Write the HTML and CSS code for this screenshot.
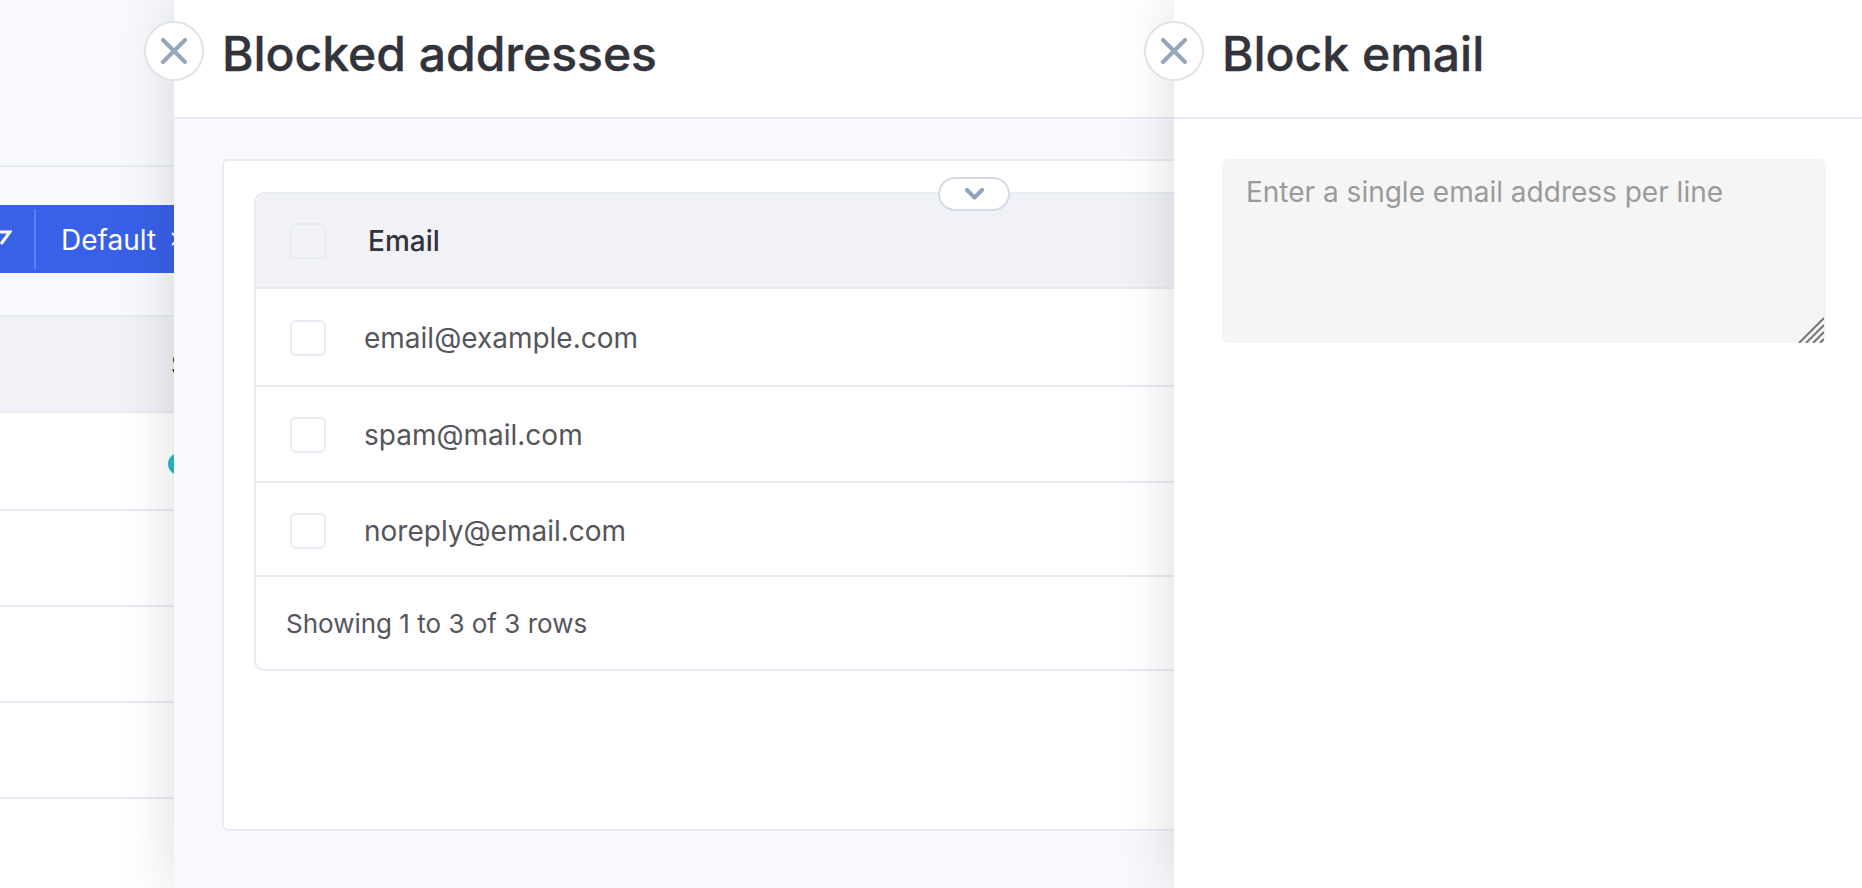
FILE: index.html
```html
<!DOCTYPE html>
<html lang="en">

<head>
  <meta charset="UTF-8">
  <meta name="viewport" content="width=device-width, initial-scale=1.0">
  <title>Blocked addresses</title>
  <link rel="stylesheet" href="styles.css">
</head>

<body>
  <!-- page behind the two side panels -->
  <div class="page">
    <div class="page-top"></div>
    <div class="toolbar">
      <div class="btn-group">
        <svg class="btn-icon" width="12" height="20" viewBox="0 0 12 20">
          <path d="M-6 4H10L1 16" fill="none" stroke="#fff" stroke-width="3" />
        </svg>
        <span class="btn-divider"></span>
        <span class="btn-label">Default</span>
        <svg class="btn-caret" width="14" height="14" viewBox="0 0 14 14">
          <path d="M1 1L7 7L1 13M13 1L7 7L13 13" fill="none" stroke="#fff" stroke-width="2" />
        </svg>
      </div>
    </div>
    <div class="bg-table">
      <div class="bg-head"><span>Status</span></div>
      <div class="bg-row"><span class="dot"></span></div>
      <div class="bg-row"></div>
      <div class="bg-row"></div>
      <div class="bg-row"></div>
    </div>
  </div>

  <section class="panel panel-list">
    <button class="close-btn">
      <svg width="26" height="26" viewBox="0 0 26 26">
        <path d="M2 2L24 24M24 2L2 24" fill="none" stroke="#94a6bb" stroke-width="4" stroke-linecap="round" />
      </svg>
    </button>
    <header class="panel-header">
      <h1>Blocked addresses</h1>
    </header>
    <div class="panel-body">
      <div class="card">
        <button class="collapse-btn">
          <svg width="19" height="12" viewBox="0 0 19 12">
            <path d="M2 2L9.500 9.500L17 2" fill="none" stroke="#8fa3ba" stroke-width="4" stroke-linecap="round" stroke-linejoin="round" />
          </svg>
        </button>
        <div class="table-wrap">
          <div class="table-head">
            <span class="check check-head"></span>
            <span class="head-label">Email</span>
          </div>
          <div class="table-row"><span class="check"></span><span class="cell">email@example.com</span></div>
          <div class="table-row"><span class="check"></span><span class="cell">spam@mail.com</span></div>
          <div class="table-row"><span class="check"></span><span class="cell">noreply@email.com</span></div>
          <div class="table-foot">Showing 1 to 3 of 3 rows</div>
        </div>
      </div>
    </div>
  </section>

  <section class="panel panel-form">
    <button class="close-btn">
      <svg width="26" height="26" viewBox="0 0 26 26">
        <path d="M2 2L24 24M24 2L2 24" fill="none" stroke="#94a6bb" stroke-width="4" stroke-linecap="round" />
      </svg>
    </button>
    <header class="panel-header">
      <h1>Block email</h1>
    </header>
    <div class="form-body">
      <div class="field">
        <textarea class="email-input" placeholder="Enter a single email address per line"></textarea>
        <svg class="resize-grip" width="26" height="26" viewBox="0 0 26 26">
          <path d="M1 26L26 1M8 26L26 8M15 26L26 15M22 26L26 22" fill="none" stroke="#777" stroke-width="2" />
        </svg>
      </div>
    </div>
  </section>
</body>

</html>
```

FILE: styles.css
```css
* {
  margin: 0;
  padding: 0;
  box-sizing: border-box;
  font-family: "Inter", sans-serif;
}

html,
body {
  height: 100%;
  width: 100%;
  overflow: hidden;
}

body {
  position: relative;
  background-color: #fff;
}

/* background page */
.page-top {
  height: 167px;
  background-color: #f8f9fd;
  border-bottom: 2px solid #e9ebf4;
}

.toolbar {
  height: 148px;
  padding-top: 38px;
  background-color: #f8f9fd;
}

.btn-group {
  display: flex;
  align-items: center;
  height: 68px;
  background-color: #3861e8;
  color: #fff;
}

.btn-icon {
  flex: none;
  margin-top: -2px;
}

.btn-divider {
  width: 2px;
  height: 60px;
  margin-left: 22px;
  background-color: #5c7eee;
}

.btn-label {
  margin-left: 25px;
  padding-top: 1px;
  font-size: 28px;
}

.btn-caret {
  margin-left: 15px;
}

.bg-head {
  height: 98px;
  padding-left: 171px;
  line-height: 96px;
  font-size: 28px;
  font-weight: 500;
  color: #33333b;
  background-color: #f1f2f8;
  border-top: 2px solid #e9ebf4;
  border-bottom: 2px solid #e9ebf4;
}

.bg-row {
  display: flex;
  align-items: center;
  height: 96px;
  padding-left: 168px;
  border-bottom: 2px solid #e9ebf4;
}

.bg-row:nth-child(2) {
  height: 98px;
}

.dot {
  width: 22px;
  height: 22px;
  margin-top: 6px;
  border-radius: 50%;
  background-color: #2fb9cb;
}

/* side panels */
.panel {
  position: absolute;
  top: 0;
  right: 0;
  bottom: 0;
  background-color: #fff;
  box-shadow: 0 0 56px rgba(0, 0, 0, 0.14);
}

.panel-list {
  left: 174px;
  background-color: #f8f9fd;
}

.panel-form {
  left: 1174px;
}

.close-btn {
  position: absolute;
  top: 21px;
  left: -30px;
  display: flex;
  align-items: center;
  justify-content: center;
  width: 60px;
  height: 60px;
  border: 2px solid #dfe3ea;
  border-radius: 50%;
  background-color: #fff;
}

.panel-header {
  height: 119px;
  padding-left: 48px;
  background-color: #fff;
  border-bottom: 2px solid #e9ebf4;
}

.panel-header h1 {
  font-size: 48px;
  font-weight: 500;
  line-height: 107px;
  color: #33333b;
  -webkit-text-stroke: 0.4px #33333b;
}

.panel-body {
  padding: 40px 136px 0 48px;
}

.card {
  position: relative;
  height: 672px;
  padding: 31px 30px;
  background-color: #fff;
  border: 2px solid #e9ebf4;
  border-radius: 6px;
}

.collapse-btn {
  position: absolute;
  top: 16px;
  left: 50%;
  display: flex;
  align-items: center;
  justify-content: center;
  width: 72px;
  height: 34px;
  margin-left: -36px;
  background-color: #fff;
  border: 2px solid #d5dbe6;
  border-radius: 17px;
}

.table-wrap {
  border: 2px solid #e9ebf4;
  border-radius: 10px;
}

.table-head,
.table-row {
  display: flex;
  align-items: center;
  padding-left: 34px;
  border-bottom: 2px solid #e9ebf4;
}

.table-head {
  height: 95px;
  border-radius: 8px 8px 0 0;
  background-color: #f1f2f8;
}

.table-row {
  height: 96px;
  padding-top: 2px;
}

.table-row:nth-child(2) {
  height: 98px;
}

.table-row:nth-child(4) {
  height: 94px;
  padding-top: 4px;
}

.check {
  flex: none;
  width: 36px;
  height: 36px;
  background-color: #fff;
  border: 2px solid #e9ebf4;
  border-radius: 6px;
}

.check-head {
  background-color: #f1f2f8;
}

.head-label {
  margin-left: 42px;
  font-size: 28px;
  font-weight: 500;
  color: #33333b;
}

.cell {
  margin-left: 38px;
  font-size: 28px;
  color: #55555c;
}

.table-foot {
  height: 92px;
  padding-left: 30px;
  line-height: 94px;
  font-size: 26px;
  color: #55555c;
}

/* block email form */
.form-body {
  padding: 40px 36px 0 48px;
}

.field {
  position: relative;
}

.email-input {
  display: block;
  width: 100%;
  height: 184px;
  padding: 15px 24px;
  font-size: 28px;
  line-height: 36px;
  color: #33333b;
  background-color: #f5f5f5;
  border: none;
  border-radius: 6px;
  outline: none;
  resize: none;
}

.email-input::placeholder {
  color: #9a9a9a;
}

.resize-grip {
  position: absolute;
  right: 2px;
  bottom: 0;
}
```
